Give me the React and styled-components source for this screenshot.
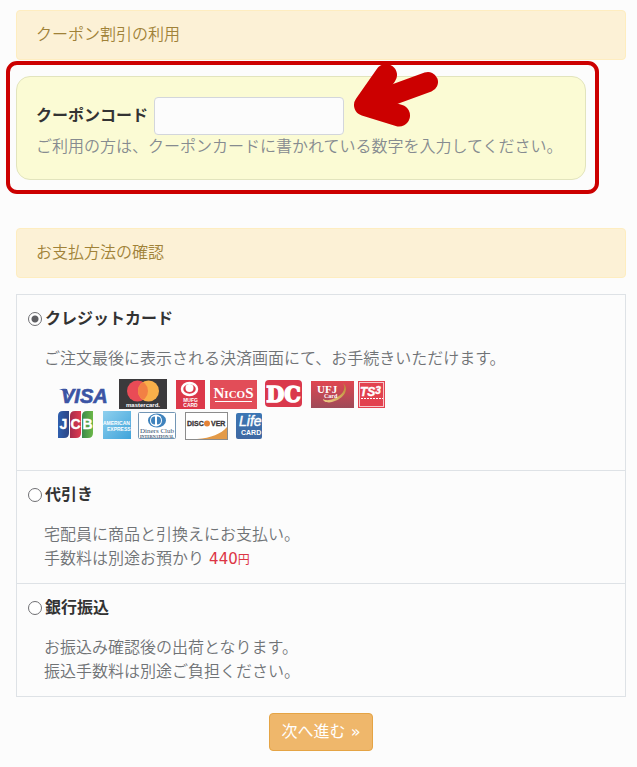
import React, { useState } from "react";
import styled, { createGlobalStyle } from "styled-components";

const red = "#cc0000";
const line = "#dee2e6";

const GlobalStyle = createGlobalStyle`
  * {
    box-sizing: border-box;
  }
  body {
    margin: 0;
    background: #fcfcfc;
    color: #333;
    font-family: "DejaVu Sans", "Noto Sans CJK JP", sans-serif;
    font-size: 16px;
    font-weight: 350;
    line-height: 24px;
  }
`;

const Form = styled.form`
  padding: 10px 11px 16px 16px;
`;

const Heading = styled.h2`
  margin: 0 0 16px;
  padding: 12px 19px;
  border: 1px solid #feedc0;
  border-radius: 4px;
  background: #fcf1d6;
  color: #a08238;
  font-size: 16px;
  font-weight: 350;
`;

const Coupon = styled.section`
  position: relative;
  margin: 0 40px 48px 0;
  padding: 20px 19px;
  border: 1px solid #e2e4bd;
  border-radius: 14px;
  background: #fbfbd4;
`;

const Frame = styled.div`
  position: absolute;
  top: -16px;
  right: -14px;
  bottom: -15px;
  left: -11px;
  border: 4px solid ${red};
  border-radius: 11px;
  pointer-events: none;
`;

const CouponRow = styled.div`
  display: flex;
  align-items: center;
  gap: 6px;
`;

const Label = styled.label`
  font-weight: 700;
`;

const Field = styled.div`
  position: relative;
  flex: 0 1 190px;
`;

const Input = styled.input`
  display: block;
  width: 100%;
  height: 38px;
  padding: 6px 12px;
  border: 1px solid #d3d6dc;
  border-radius: 4px;
  background: #fcfcfc;
  font: inherit;
`;

const Arrow = styled.svg`
  position: absolute;
  top: -35px;
  left: calc(100% + 8px);
  pointer-events: none;
`;

const Help = styled.p`
  margin: 0;
  color: #868b90;
`;

const Methods = styled.div`
  margin-bottom: 16px;
  border: 1px solid ${line};
  border-bottom: 0;
`;

const Method = styled.div`
  padding: 12px 11px;
  border-bottom: 1px solid ${line};
`;

const MethodTitle = styled.div`
  display: flex;
  align-items: center;
  gap: 3px;
  margin-bottom: 16px;
`;

const Radio = styled.input`
  width: 14px;
  height: 14px;
  margin: 0;
  appearance: none;
  border: 1px solid #6f6f73;
  border-radius: 50%;
  background: #fff;
  &:checked {
    background: radial-gradient(circle, #5f5f63 0 3px, #fff 4px);
  }
`;

const Description = styled.div`
  padding-left: 16px;
  color: #707376;
`;

const Price = styled.span`
  color: #dc3545;
  font-size: 15px;
  font-weight: 400;
  line-height: 1;
  small {
    font-size: 12px;
  }
`;

const Brands = styled.svg`
  display: block;
  max-width: 100%;
`;

const Actions = styled.div`
  display: flex;
  justify-content: center;
`;

const Button = styled.button`
  padding: 6px 12px;
  border: 1px solid #e5a445;
  border-radius: 4px;
  background: #efb76b;
  color: #fff;
  font: inherit;
  font-weight: 400;
`;

const sans = "Liberation Sans, sans-serif";
const serif = "Liberation Serif, serif";

const CardBrands = () => (
  <Brands width="348" height="87" viewBox="44 371 348 87" role="img" aria-label="利用できるカード">
    <defs>
      <linearGradient id="ufj" x1="0" y1="0" x2="0" y2="1">
        <stop offset="0" stopColor="#e04650" />
        <stop offset="1" stopColor="#9e4b59" />
      </linearGradient>
      <linearGradient id="gold" x1="0" y1="1" x2="1" y2="0">
        <stop offset="0" stopColor="#f0d08a" />
        <stop offset="1" stopColor="#b8862f" />
      </linearGradient>
      <linearGradient id="amex" x1="0" y1="0" x2="1" y2="1">
        <stop offset="0" stopColor="#8fd0ee" />
        <stop offset="1" stopColor="#3fa3da" />
      </linearGradient>
      <linearGradient id="jcbBlue">
        <stop offset="0" stopColor="#2f5fae" />
        <stop offset="1" stopColor="#2c4585" />
      </linearGradient>
      <linearGradient id="jcbRed">
        <stop offset="0" stopColor="#a52c4c" />
        <stop offset="1" stopColor="#e03a50" />
      </linearGradient>
      <linearGradient id="jcbGreen">
        <stop offset="0" stopColor="#3a8a4c" />
        <stop offset="1" stopColor="#6cb848" />
      </linearGradient>
      <linearGradient id="life" x1="0" y1="0" x2="0" y2="1">
        <stop offset="0" stopColor="#3b76b4" />
        <stop offset="1" stopColor="#3f68a2" />
      </linearGradient>
      <clipPath id="amexClip">
        <rect x="103" y="411" width="28" height="28" />
      </clipPath>
      <clipPath id="lifeClip">
        <rect x="236" y="413" width="26" height="26" rx="2" />
      </clipPath>
      <clipPath id="mcClip">
        <circle cx="137.5" cy="391" r="10.5" />
      </clipPath>
    </defs>

    <text x="61" y="403" fill="#3b54a4" stroke="#3b54a4" strokeWidth=".6" fontFamily={sans} fontSize="20" fontWeight="700" fontStyle="italic">VISA</text>
    <path d="M59 389h8l3 9c-2-4-5-7-11-9z" fill="#3b54a4" />

    <rect x="119" y="379" width="48" height="30" fill="#3b3a3c" />
    <circle cx="137.5" cy="391" r="10.5" fill="#e94b56" />
    <circle cx="148.5" cy="391" r="10.5" fill="#f9b04a" />
    <circle cx="148.5" cy="391" r="10.5" fill="#f28044" clipPath="url(#mcClip)" />
    <text x="143" y="407" fill="#fff" fontFamily={sans} fontSize="6" fontWeight="700" textAnchor="middle">mastercard.</text>

    <rect x="176" y="380" width="29" height="29" fill="#dc384a" />
    <ellipse cx="189.5" cy="389" rx="7.5" ry="6" fill="none" stroke="#fff" strokeWidth="2.5" />
    <circle cx="189.5" cy="388" r="4" fill="#fff" />
    <text fill="#fff" fontFamily={sans} fontSize="5" fontWeight="700" textAnchor="middle">
      <tspan x="190.5" y="402">MUFG</tspan>
      <tspan x="190.5" y="407">CARD</tspan>
    </text>

    <rect x="210" y="380" width="47" height="29" fill="#e24d58" />
    <text x="233.5" y="398" fill="#fff" fontFamily={serif} fontSize="15" fontWeight="700" textAnchor="middle">
      N<tspan fontSize="11">ICO</tspan>S
    </text>
    <path d="M215 401.5h37" stroke="#fff" />

    <rect x="265" y="380" width="37" height="27" rx="4" fill="#da384c" />
    <text x="283.5" y="402" fill="#fff" stroke="#fff" strokeWidth="1.5" fontFamily="DejaVu Serif Condensed, DejaVu Serif, serif" fontSize="23" fontWeight="700" textAnchor="middle">DC</text>

    <rect x="311" y="381" width="43" height="27" fill="url(#ufj)" />
    <path d="M343 383c7 6 1 16-11 19-4 1-9 0-9-3 3 2 7 1 10 0 9-3 14-10 10-16z" fill="url(#gold)" />
    <text x="317" y="393" fill="#fff" fontFamily={serif} fontSize="11" fontWeight="700">UFJ</text>
    <text x="324" y="398" fill="#fff" fontFamily={serif} fontSize="6" fontWeight="700">Card</text>

    <rect x="358" y="381" width="27" height="27" fill="#e2424f" />
    <rect x="359.5" y="382.5" width="24" height="24" fill="none" stroke="#fff" strokeOpacity=".7" />
    <text x="360" y="396" fill="#fff" stroke="#fff" strokeWidth=".4" fontFamily={sans} fontSize="12" fontWeight="700" fontStyle="italic">
      TS<tspan dy="-2" fontSize="10">3</tspan>
    </text>
    <path d="M361 398.5h22" stroke="#fff" strokeDasharray="2 1" />

    <path d="M58 416q0-5 5-5h6v22q0 5-5 5h-6z" fill="url(#jcbBlue)" />
    <path d="M70 416q0-5 5-5h6v22q0 5-5 5h-6z" fill="url(#jcbRed)" />
    <path d="M82 416q0-5 5-5h6v22q0 5-5 5h-6z" fill="url(#jcbGreen)" />
    <text y="429" fill="#fff" stroke="#fff" strokeWidth=".4" fontFamily={sans} fontSize="14" fontWeight="700" textAnchor="middle">
      <tspan x="63.5">J</tspan>
      <tspan x="75.5">C</tspan>
      <tspan x="87.5">B</tspan>
    </text>

    <rect x="103" y="411" width="28" height="28" fill="url(#amex)" />
    <g clipPath="url(#amexClip)" fill="#fff" fontFamily={sans} fontSize="5" fontWeight="700">
      <text x="103" y="425">AMERICAN</text>
      <text x="107" y="431">EXPRESS</text>
    </g>

    <rect x="138.5" y="412.5" width="37" height="26" rx="1" fill="#fff" stroke="#7396b4" />
    <ellipse cx="157" cy="420.500" rx="9" ry="7" fill="#3f83bd" />
    <circle cx="156" cy="420.5" r="6" fill="#fff" />
    <path d="M155 416.500a4 4 0 000 8zM157 416.500a4 4 0 010 8z" fill="#3f83bd" />
    <text x="157" y="433" fill="#36506d" fontFamily={serif} fontSize="7" textAnchor="middle">Diners Club</text>
    <text x="157" y="438" fill="#36506d" fontFamily={serif} fontSize="4" fontWeight="700" textAnchor="middle">INTERNATIONAL</text>

    <rect x="185.5" y="412.5" width="42" height="27" fill="#fff" stroke="#8c8c8c" />
    <path d="M227 427v12h-30c14-1 24-5 30-12z" fill="#e39a48" />
    <circle cx="207" cy="423.5" r="3" fill="#e58338" />
    <g fill="#3b3638" stroke="#3b3638" strokeWidth=".3" fontFamily={sans} fontSize="7" fontWeight="700">
      <text x="187" y="426">DISC</text>
      <text x="211" y="426">VER</text>
    </g>

    <rect x="236" y="413" width="26" height="26" rx="2" fill="url(#life)" />
    <g clipPath="url(#lifeClip)" fill="#fff" fontFamily={sans}>
      <text x="239" y="426" fontSize="14" fontStyle="italic" stroke="#fff" strokeWidth=".4">Life</text>
      <text x="241" y="435" fontSize="7" fontWeight="700">CARD</text>
    </g>
  </Brands>
);

const methods = [
  {
    id: "credit",
    title: "クレジットカード",
    body: (
      <>
        ご注文最後に表示される決済画面にて、お手続きいただけます。
        <CardBrands />
      </>
    )
  },
  {
    id: "cod",
    title: "代引き",
    body: (
      <>
        宅配員に商品と引換えにお支払い。
        <br />
        手数料は別途お預かり{" "}
        <Price>
          440<small>円</small>
        </Price>
      </>
    )
  },
  {
    id: "bank",
    title: "銀行振込",
    body: (
      <>
        お振込み確認後の出荷となります。
        <br />
        振込手数料は別途ご負担ください。
      </>
    )
  }
];

const App = () => {
  const [code, setCode] = useState("");
  const [method, setMethod] = useState("credit");

  return (
    <>
      <GlobalStyle />
      <Form onSubmit={event => event.preventDefault()}>
        <Heading>クーポン割引の利用</Heading>
        <Coupon>
          <CouponRow>
            <Label htmlFor="coupon">クーポンコード</Label>
            <Field>
              <Input
                id="coupon"
                type="text"
                value={code}
                onChange={event => setCode(event.target.value)}
              />
              <Arrow width="88" height="66" viewBox="352 62 88 66" aria-hidden="true">
                <path
                  d="M386 75L365 105L399 115.5"
                  fill="none"
                  stroke={red}
                  strokeWidth="22"
                  strokeLinecap="round"
                  strokeLinejoin="round"
                />
                <path d="M428 82L365 105" stroke={red} strokeWidth="20" strokeLinecap="round" />
              </Arrow>
            </Field>
          </CouponRow>
          <Help>ご利用の方は、クーポンカードに書かれている数字を入力してください。</Help>
          <Frame />
        </Coupon>

        <Heading>お支払方法の確認</Heading>
        <Methods>
          {methods.map(({ id, title, body }) => (
            <Method key={id}>
              <MethodTitle>
                <Radio
                  type="radio"
                  name="method"
                  id={id}
                  checked={method === id}
                  onChange={() => setMethod(id)}
                />
                <Label htmlFor={id}>{title}</Label>
              </MethodTitle>
              <Description>{body}</Description>
            </Method>
          ))}
        </Methods>

        <Actions>
          <Button type="submit">次へ進む »</Button>
        </Actions>
      </Form>
    </>
  );
};

export default App;
